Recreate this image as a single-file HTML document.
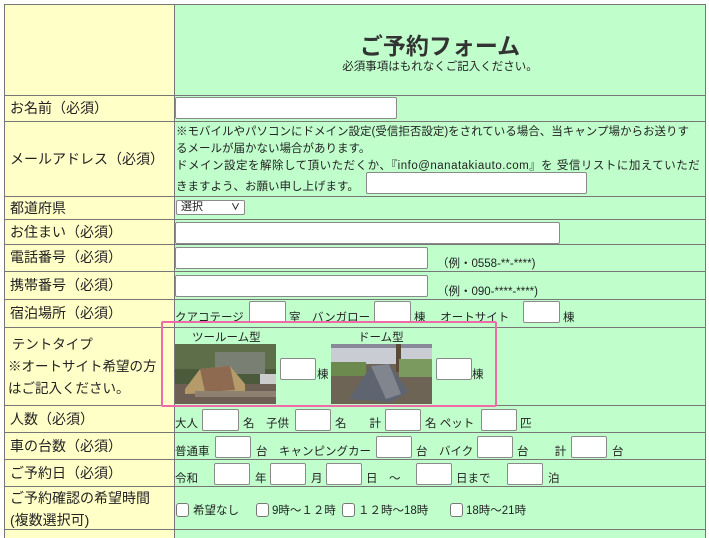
<!DOCTYPE html>
<html><head><meta charset="utf-8"><style>
*{margin:0;padding:0;box-sizing:border-box}
body{width:709px;height:538px;overflow:hidden;background:#fff;font-family:"Liberation Sans","Noto Sans CJK JP",sans-serif;color:#222;position:relative}
.a{position:absolute;white-space:nowrap}
.L{background:#ffffc8}.R{background:#c0ffcc}
.h{position:absolute;left:4px;width:701px;height:1px;background:#777}
.v{position:absolute;top:4px;width:1px;background:#777}
.in{position:absolute;background:#fff;border:1px solid #8a8a8a;border-radius:2px}
.lb{position:absolute;left:10px;font-size:14px;line-height:22px}
.s{position:absolute;font-size:11.5px;white-space:nowrap}
.cb{position:absolute;width:13px;height:14px;background:#fff;border:1px solid #777;border-radius:3px}
</style></head><body>
<div class="a L" style="left:4px;top:4px;width:170px;height:534px"></div>
<div class="a R" style="left:175px;top:4px;width:530px;height:534px"></div>
<div class="h" style="top:4px"></div>
<div class="h" style="top:95px"></div>
<div class="h" style="top:121px"></div>
<div class="h" style="top:196px"></div>
<div class="h" style="top:219px"></div>
<div class="h" style="top:244px"></div>
<div class="h" style="top:271px"></div>
<div class="h" style="top:299px"></div>
<div class="h" style="top:327px"></div>
<div class="h" style="top:405px"></div>
<div class="h" style="top:432px"></div>
<div class="h" style="top:459px"></div>
<div class="h" style="top:486px"></div>
<div class="h" style="top:529px"></div>
<div class="v" style="left:4px;height:534px"></div>
<div class="v" style="left:174px;height:534px"></div>
<div class="v" style="left:705px;height:534px"></div>

<div class="a" style="left:175px;width:530px;top:27px;text-align:center;font-size:23px;font-weight:bold;color:#333">ご予約フォーム</div>
<div class="a" style="left:175px;width:530px;top:58px;text-align:center;font-size:11.5px">必須事項はもれなくご記入ください。</div>

<div class="lb" style="top:97px">お名前（必須）</div>
<div class="in" style="left:175px;top:97px;width:222px;height:22px"></div>

<div class="lb" style="top:148px">メールアドレス（必須）</div>
<div class="s" style="left:176px;top:124px;line-height:17px">※モバイルやパソコンにドメイン設定(受信拒否設定)をされている場合、当キャンプ場からお送りす<br>るメールが届かない場合があります。<br><span style="letter-spacing:0.5px">ドメイン設定を解除して頂いただくか、『info@nanatakiauto.com』を 受信リストに加えていただ</span></div>
<div class="s" style="left:176px;top:178px">きますよう、お願い申し上げます。</div>
<div class="in" style="left:366px;top:172px;width:221px;height:22px"></div>

<div class="lb" style="top:197px">都道府県</div>
<div class="in" style="left:176px;top:200px;width:69px;height:15px;font-size:11px;padding-left:4px;line-height:13px">選択<span style="position:absolute;right:4px;top:0;font-size:9px;font-weight:bold">&#8744;</span></div>

<div class="lb" style="top:221px">お住まい（必須）</div>
<div class="in" style="left:175px;top:222px;width:385px;height:22px"></div>

<div class="lb" style="top:246px">電話番号（必須）</div>
<div class="in" style="left:175px;top:247px;width:253px;height:22px"></div>
<div class="s" style="left:437px;top:255px">（例・0558-**-****)</div>

<div class="lb" style="top:274px">携帯番号（必須）</div>
<div class="in" style="left:175px;top:275px;width:253px;height:22px"></div>
<div class="s" style="left:437px;top:283px">（例・090-****-****)</div>

<div class="lb" style="top:302px">宿泊場所（必須）</div>
<div class="s" style="left:175px;top:309px">クアコテージ</div>
<div class="in" style="left:249px;top:301px;width:37px;height:22px"></div>
<div class="s" style="left:289px;top:309px">室　バンガロー</div>
<div class="in" style="left:374px;top:301px;width:37px;height:22px"></div>
<div class="s" style="left:414px;top:309px">棟　 オートサイト</div>
<div class="in" style="left:523px;top:301px;width:37px;height:22px"></div>
<div class="s" style="left:563px;top:309px">棟</div>

<div class="lb" style="top:334px;line-height:22px;font-size:13.5px;left:8px">&nbsp;テントタイプ<br>※オートサイト希望の方<br>はご記入ください。</div>
<div class="s" style="left:192px;top:329px">ツールーム型</div>
<div class="s" style="left:358px;top:329px">ドーム型</div>
<svg class="a" style="left:175px;top:344px" width="101" height="60" viewBox="0 0 101 60">
<rect width="101" height="60" fill="#4a5a3a"/>
<rect x="0" y="0" width="101" height="25" fill="#5d6e48"/>
<rect x="40" y="8" width="50" height="22" fill="#7a7f74"/>
<rect x="0" y="40" width="101" height="20" fill="#6e5f55"/>
<polygon points="10,45 25,25 55,22 70,40 70,48 10,50" fill="#b59b6a"/>
<polygon points="25,25 55,22 60,46 30,48" fill="#8d6a50"/>
<rect x="85" y="30" width="16" height="10" fill="#ccc"/>
<rect x="20" y="47" width="81" height="6" fill="#8f8171"/>
</svg>
<svg class="a" style="left:331px;top:344px" width="101" height="60" viewBox="0 0 101 60">
<rect width="101" height="60" fill="#6e6456"/>
<rect width="101" height="20" fill="#c9ccd2"/>
<rect x="0" y="0" width="101" height="4" fill="#889"/>
<rect x="65" y="0" width="5" height="28" fill="#5a4a38"/>
<rect x="0" y="18" width="35" height="14" fill="#6c8a4e"/>
<rect x="68" y="15" width="33" height="18" fill="#7a9a60"/>
<polygon points="18,55 40,22 58,20 78,48 60,58" fill="#5e6470"/>
<polygon points="40,22 58,20 70,50 55,55" fill="#80858e"/>
</svg>
<div class="in" style="left:280px;top:358px;width:36px;height:22px"></div>
<div class="s" style="left:317px;top:366px">棟</div>
<div class="in" style="left:436px;top:358px;width:36px;height:22px"></div>
<div class="s" style="left:472px;top:366px">棟</div>
<div class="a" style="left:161px;top:321px;width:336px;height:86px;border:2px solid #f06aa8;border-radius:2px"></div>

<div class="lb" style="top:408px">人数（必須）</div>
<div class="s" style="left:175px;top:415px">大人</div>
<div class="in" style="left:202px;top:409px;width:37px;height:22px"></div>
<div class="s" style="left:243px;top:415px">名　子供</div>
<div class="in" style="left:295px;top:409px;width:36px;height:22px"></div>
<div class="s" style="left:335px;top:415px">名　　計</div>
<div class="in" style="left:385px;top:409px;width:36px;height:22px"></div>
<div class="s" style="left:425px;top:415px">名 ペット</div>
<div class="in" style="left:481px;top:409px;width:36px;height:22px"></div>
<div class="s" style="left:520px;top:415px">匹</div>

<div class="lb" style="top:435px">車の台数（必須）</div>
<div class="s" style="left:175px;top:443px">普通車</div>
<div class="in" style="left:215px;top:436px;width:36px;height:22px"></div>
<div class="s" style="left:256px;top:443px">台　キャンピングカー</div>
<div class="in" style="left:376px;top:436px;width:36px;height:22px"></div>
<div class="s" style="left:416px;top:443px">台　バイク</div>
<div class="in" style="left:477px;top:436px;width:36px;height:22px"></div>
<div class="s" style="left:517px;top:443px">台　　 計</div>
<div class="in" style="left:571px;top:436px;width:36px;height:22px"></div>
<div class="s" style="left:612px;top:443px">台</div>

<div class="lb" style="top:462px">ご予約日（必須）</div>
<div class="s" style="left:175px;top:470px">令和</div>
<div class="in" style="left:214px;top:463px;width:36px;height:22px"></div>
<div class="s" style="left:255px;top:470px">年</div>
<div class="in" style="left:270px;top:463px;width:36px;height:22px"></div>
<div class="s" style="left:311px;top:470px">月</div>
<div class="in" style="left:326px;top:463px;width:36px;height:22px"></div>
<div class="s" style="left:366px;top:470px">日　～</div>
<div class="in" style="left:416px;top:463px;width:36px;height:22px"></div>
<div class="s" style="left:456px;top:470px">日まで</div>
<div class="in" style="left:507px;top:463px;width:36px;height:22px"></div>
<div class="s" style="left:548px;top:470px">泊</div>

<div class="lb" style="top:487px;line-height:22px">ご予約確認の希望時間<br>(複数選択可)</div>
<div class="cb" style="left:176px;top:503px"></div>
<div class="s" style="left:193px;top:502px">希望なし</div>
<div class="cb" style="left:256px;top:503px"></div>
<div class="s" style="left:272px;top:502px">9時～１２時</div>
<div class="cb" style="left:342px;top:503px"></div>
<div class="s" style="left:358px;top:502px">１２時～18時</div>
<div class="cb" style="left:450px;top:503px"></div>
<div class="s" style="left:466px;top:502px">18時～21時</div>
</body></html>
